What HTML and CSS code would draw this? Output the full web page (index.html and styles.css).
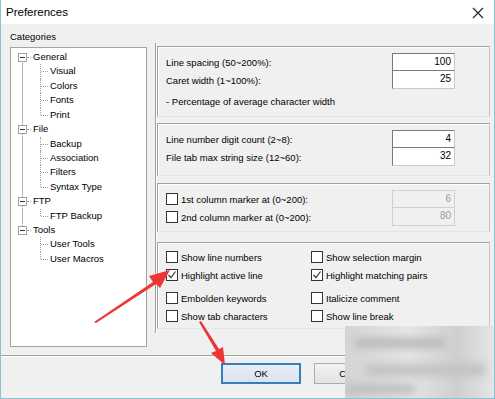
FILE: index.html
```html
<!DOCTYPE html>
<html lang="en">
<head>
    <meta charset="UTF-8">
    <title>Preferences</title>
    <link rel="stylesheet" href="styles.css">
</head>
<body>
    <div class="window">
        <div class="titlebar">
            <span class="title">Preferences</span>
            <svg class="close" width="12" height="12" viewBox="0 0 12 12">
                <path d="M1 1 L11 11 M11 1 L1 11" stroke="#222" stroke-width="1.1" fill="none"/>
            </svg>
        </div>

        <div class="content">
            <div class="left">
                <div class="cat-label">Categories</div>
                <ul class="tree">
                    <li class="root first"><span class="exp"></span>General</li>
                    <li class="child on-root">Visual</li>
                    <li class="child on-root">Colors</li>
                    <li class="child on-root">Fonts</li>
                    <li class="child on-root last">Print</li>
                    <li class="root"><span class="exp"></span>File</li>
                    <li class="child on-root">Backup</li>
                    <li class="child on-root">Association</li>
                    <li class="child on-root">Filters</li>
                    <li class="child on-root last">Syntax Type</li>
                    <li class="root"><span class="exp"></span>FTP</li>
                    <li class="child on-root last">FTP Backup</li>
                    <li class="root end"><span class="exp"></span>Tools</li>
                    <li class="child">User Tools</li>
                    <li class="child last">User Macros</li>
                </ul>
            </div>

            <div class="vsep"></div>

            <div class="right">
                <div class="group g1">
                    <div class="row"><span>Line spacing (50<span class="tl">~</span>200%):</span><span class="field">100</span></div>
                    <div class="row"><span>Caret width (1<span class="tl">~</span>100%):</span><span class="field">25</span></div>
                    <div class="row note">- Percentage of average character width</div>
                </div>

                <div class="group g2">
                    <div class="row"><span>Line number digit count (2<span class="tl">~</span>8):</span><span class="field">4</span></div>
                    <div class="row"><span>File tab max string size (12<span class="tl">~</span>60):</span><span class="field">32</span></div>
                </div>

                <div class="group g3">
                    <div class="row"><label class="check"><span class="box"></span>1st column marker at (0<span class="tl">~</span>200):</label><span class="field off">6</span></div>
                    <div class="row"><label class="check"><span class="box"></span>2nd column marker at (0<span class="tl">~</span>200):</label><span class="field off">80</span></div>
                </div>

                <div class="group g4">
                    <label class="check"><span class="box"></span>Show line numbers</label>
                    <label class="check"><span class="box"></span>Show selection margin</label>
                    <label class="check"><span class="box on"></span>Highlight active line</label>
                    <label class="check"><span class="box on"></span>Highlight matching pairs</label>
                    <label class="check"><span class="box"></span>Embolden keywords</label>
                    <label class="check"><span class="box"></span>Italicize comment</label>
                    <label class="check"><span class="box"></span>Show tab characters</label>
                    <label class="check"><span class="box"></span>Show line break</label>
                </div>
            </div>
        </div>

        <div class="hsep"></div>

        <div class="buttons">
            <button class="btn default">OK</button>
            <button class="btn">Cancel</button>
            <button class="btn">Apply</button>
        </div>

        <!-- annotation arrows drawn over the dialog -->
        <svg class="arrows" width="495" height="399" viewBox="0 0 495 399">
            <path d="M94 322 L153 282 L149 276 L170 270 L160 288 L156 284 L96 323 Z" fill="#ec3535"/>
            <path d="M199 322 L216 351 L211 353 L225 365 L223 347 L219 349 L201 321 Z" fill="#ec3535"/>
        </svg>

        <div class="watermark">
            <span class="wm a"></span>
            <span class="wm b"></span>
            <span class="wm c"></span>
        </div>
    </div>
</body>
</html>
```

FILE: styles.css
```css
html, body {
    margin: 0;
    padding: 0;
    background: #ffffff;
}
.window {
    position: relative;
    width: 495px;
    height: 399px;
    box-sizing: border-box;
    border: 1px solid #8cc2d2;
    border-top: none;
    background: #f0f0f0;
    font-family: "Liberation Sans", Arial, sans-serif;
    font-size: 9.5px;
    color: #000;
    overflow: hidden;
}
.titlebar {
    height: 24px;
    background: #ffffff;
    display: flex;
    align-items: center;
    justify-content: space-between;
    padding: 0 10px 0 5px;
}
.title {
    font-size: 11.5px;
}
.close {
    margin-top: 2px;
}

/* main area */
.content {
    display: flex;
    padding: 7px 4px 0 9px;
}
.left {
    width: 137px;
}
.cat-label {
    height: 12px;
    line-height: 12px;
}
.tree {
    list-style: none;
    margin: 4px 0 0;
    padding: 2px 0 0;
    height: 300px;
    box-sizing: border-box;
    background: #fff;
    border: 1px solid #a3a3a3;
}
.tree li {
    position: relative;
    height: 14.43px;
    line-height: 14.43px;
    white-space: nowrap;
}
.root {
    padding-left: 22px;
}
.child {
    padding-left: 39px;
}
.exp {
    position: absolute;
    left: 7px;
    top: 3px;
    width: 7px;
    height: 7px;
    border: 1px solid #a0a0a0;
    background: #fff;
    z-index: 1;
}
.exp::after {
    content: "";
    position: absolute;
    left: 1px;
    top: 3px;
    width: 5px;
    height: 1px;
    background: #333;
}
/* dotted connector lines */
.root::before {
    content: "";
    position: absolute;
    left: 11px;
    top: 0;
    bottom: 0;
    border-left: 1px dotted #a0a0a0;
}
.root.first::before {
    top: 7px;
}
.root.end::before {
    bottom: 7px;
}
.root::after {
    content: "";
    position: absolute;
    left: 16px;
    top: 7px;
    width: 4px;
    border-top: 1px dotted #a0a0a0;
}
.on-root {
    background: linear-gradient(#b4b4b4, #b4b4b4) 11px 0 / 1px 100% no-repeat;
}
.child::before {
    content: "";
    position: absolute;
    left: 29px;
    top: 0;
    bottom: 0;
    border-left: 1px dotted #a0a0a0;
}
.child.last::before {
    bottom: 7px;
}
.child::after {
    content: "";
    position: absolute;
    left: 30px;
    top: 7px;
    width: 7px;
    border-top: 1px dotted #a0a0a0;
}

.vsep {
    width: 1px;
    height: 290px;
    margin: 12px 0 0 8px;
    background: #a0a0a0;
    border-right: 1px solid #fff;
}

.right {
    width: 333px;
    padding-top: 15px;
}
.group {
    box-sizing: border-box;
    border-top: 1px solid #a0a0a0;
    border-left: 1px solid #a0a0a0;
    border-right: 1px solid #c4c4c4;
    border-bottom: 1px solid #e4e4e4;
    box-shadow: inset 1px 1px 0 #fff;
    padding: 6px 34px 0 8px;
}
.g1 { height: 71px; }
.g2 { height: 53px; margin-top: 6px; }
.g3 { height: 49px; margin-top: 7px; }
.g4 {
    height: 87px;
    margin-top: 10px;
    padding-top: 5px;
    display: grid;
    grid-template-columns: 145px 1fr;
    grid-template-rows: 18px 18px 18px 18px;
}
.g4 .check:nth-child(n+5) {
    transform: translateY(5px);
}
.row {
    display: flex;
    align-items: center;
    justify-content: space-between;
    height: 18px;
}
.tl {
    letter-spacing: -1.5px;
    margin-right: 1.5px;
}
.note {
    height: 20px;
    margin-top: 2px;
}
.field {
    box-sizing: border-box;
    width: 63px;
    height: 18px;
    line-height: 16px;
    padding-right: 3px;
    text-align: right;
    background: #fff;
    border: 1px solid #7a7a7a;
    border-right-color: #c8c8c8;
    border-bottom-color: #c8c8c8;
    font-size: 10px;
}
.row + .row .field {
    margin-top: -1px;
    height: 19px;
}
.field.off {
    background: #f0f0f0;
    color: #9a9a9a;
    border-color: #d0d0d0;
}

.check {
    display: flex;
    align-items: center;
    height: 18px;
    white-space: nowrap;
}
.box {
    box-sizing: border-box;
    width: 12px;
    height: 12px;
    margin-right: 3px;
    border: 1px solid #333;
    background: #fff;
}
.box.on {
    background: #fff url("data:image/svg+xml;utf8,<svg xmlns='http://www.w3.org/2000/svg' width='10' height='10'><path d='M1.5 5 L4 7.5 L8.5 1.5' stroke='%23333' stroke-width='1.2' fill='none'/></svg>") center / 10px 10px no-repeat;
}

.hsep {
    margin: 8px 0 0 0;
    height: 1px;
    background: #a0a0a0;
    border-bottom: 1px solid #fff;
}
.buttons {
    display: flex;
    justify-content: flex-end;
    gap: 13px;
    padding: 6px 7px 0 0;
}
.btn {
    box-sizing: border-box;
    width: 80px;
    height: 21px;
    font-family: "Liberation Sans", Arial, sans-serif;
    font-size: 9.5px;
    background: linear-gradient(#f2f2f2, #e3e3e3);
    border: 1px solid #adadad;
    padding: 0;
}
.btn.default {
    border: 2px solid #3a7fb4;
    background: linear-gradient(#e6eef6, #dbe5ef);
}

.arrows {
    position: absolute;
    left: -1px;
    top: 0;
}

.watermark {
    position: absolute;
    left: 344px;
    top: 326px;
    width: 160px;
    height: 80px;
    background: linear-gradient(90deg, #d4d4d4, #e6e6e6 40%, #cfcfcf 70%, #ececec);
    overflow: hidden;
}
.wm {
    position: absolute;
    background: #b8b8b8;
    filter: blur(4px);
}
.wm.a { left: 10px; top: 12px; width: 90px; height: 10px; }
.wm.b { left: 20px; top: 38px; width: 120px; height: 12px; background: #c2c2c2; }
.wm.c { left: 0; top: 58px; width: 70px; height: 10px; background: #bdbdbd; }
```
